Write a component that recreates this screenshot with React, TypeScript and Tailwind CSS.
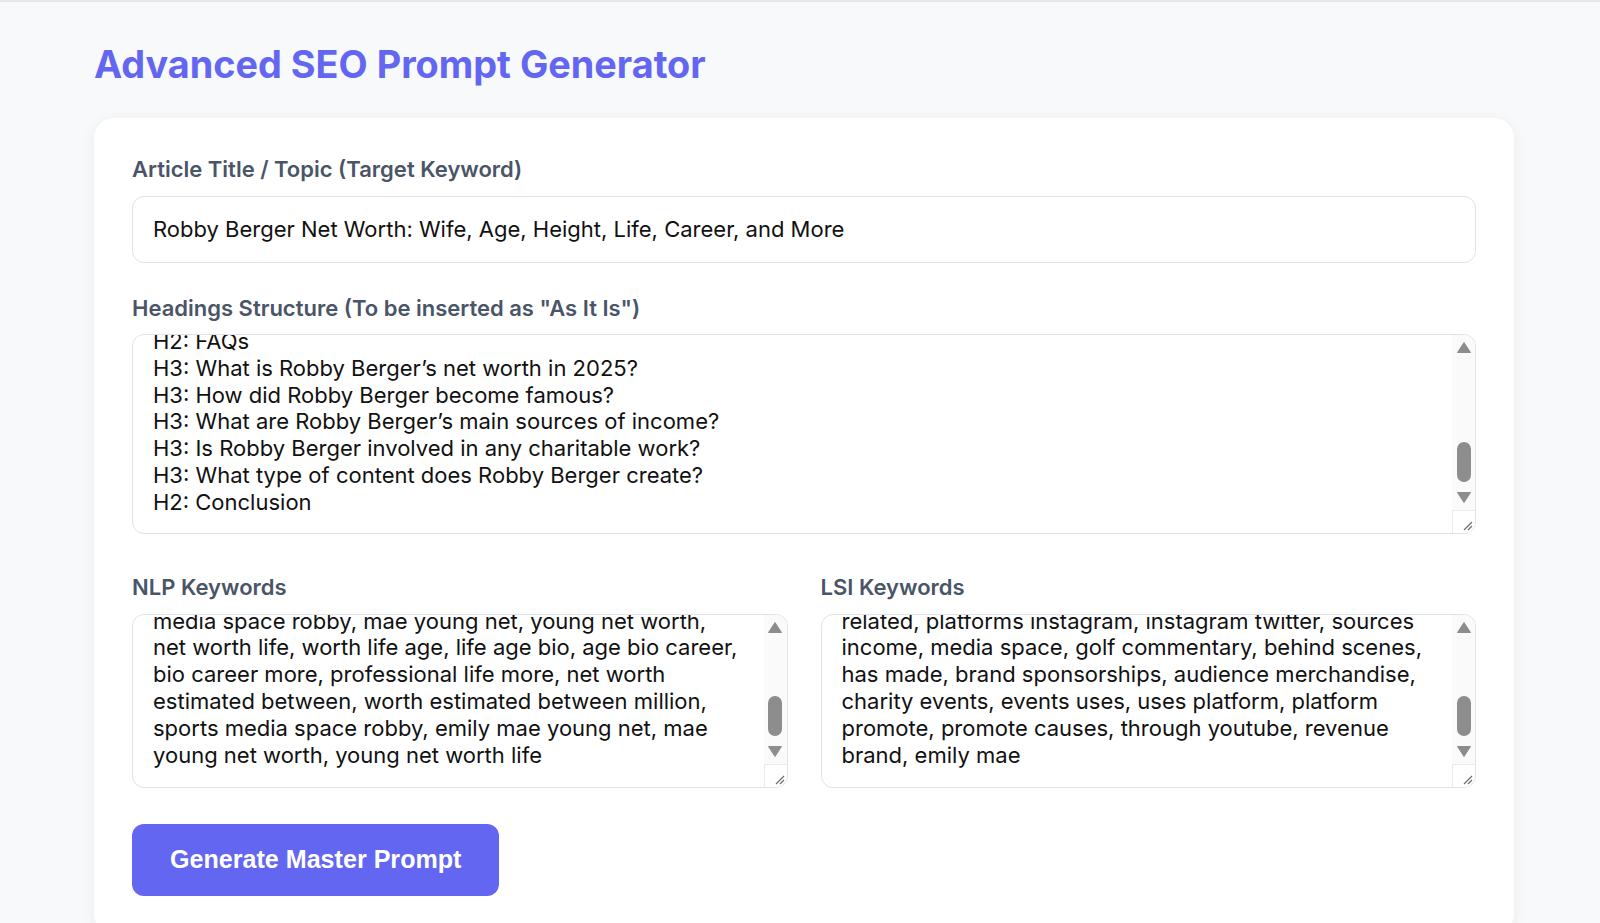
import { FC, RefObject, useEffect, useRef, useState } from 'react';

const HEADINGS = [
  'H1: Robby Berger Net Worth: Wife, Age, Height, Life, Career, and More',
  'H2: Who Is Robby Berger?',
  'H2: Robby Berger Net Worth in 2025',
  'H2: Early Life and Background',
  'H2: Age, Height, and Physical Appearance',
  'H2: Robby Berger’s Wife and Personal Life',
  'H2: Career Journey',
  'H3: Getting Started in Golf Media',
  'H3: Growth on YouTube',
  'H3: Work in the Sports Media Space',
  'H2: Sources of Income',
  'H3: YouTube Revenue',
  'H3: Brand Sponsorships and Merchandise',
  'H2: Social Media Presence',
  'H2: Charity Work and Causes',
  'H2: Key Facts About Robby Berger',
  'H2: FAQs',
  'H3: What is Robby Berger’s net worth in 2025?',
  'H3: How did Robby Berger become famous?',
  'H3: What are Robby Berger’s main sources of income?',
  'H3: Is Robby Berger involved in any charitable work?',
  'H3: What type of content does Robby Berger create?',
  'H2: Conclusion',
].join('\n');

const NLP = [
  'robby berger, net worth, robby berger net worth,',
  'emily mae young, golf youtuber, sports media,',
  'berger net worth, robby berger wife, robby berger',
  'age, robby berger height, golf content creator,',
  'youtube channel, brand deals, golf commentary,',
  'robby berger net, berger net worth wife, net worth',
  'wife age, wife age height, age height life, height',
  'life career, life career more, career and more,',
  'robby berger emily, berger emily mae, emily mae',
  'young, robby berger career, golf media space,',
  'space robby berger, sports media space, media space,',
  'media space robby, mae young net, young net worth,',
  'net worth life, worth life age, life age bio, age bio career,',
  'bio career more, professional life more, net worth',
  'estimated between, worth estimated between million,',
  'sports media space robby, emily mae young net, mae',
  'young net worth, young net worth life',
].join('\n');

const LSI = [
  'golf youtuber, content creator, youtube channel,',
  'golf videos, social media, personal life, early',
  'life, married life, wife emily, golf course, golf',
  'community, online audience, subscribers, views,',
  'sponsorship deals, golf brands, media career,',
  'sports commentary, digital creator, annual income,',
  'estimated net worth, career growth, golf fans,',
  'public figure, family life, height weight, age',
  'birthday, social platforms, fan base, channel',
  'growth, golf equipment, creator economy, media',
  'appearances, podcast, golf tournaments, events',
  'related, platforms instagram, instagram twitter, sources',
  'income, media space, golf commentary, behind scenes,',
  'has made, brand sponsorships, audience merchandise,',
  'charity events, events uses, uses platform, platform',
  'promote, promote causes, through youtube, revenue',
  'brand, emily mae',
].join('\n');

const labelClass = 'block text-[22px] leading-[26.6px] font-semibold text-[#4a5568] mb-[13px]';

// scrollbar drawn over the textarea, like the browser one
const FakeScrollbar: FC<object> = () => (
  <div className="pointer-events-none absolute top-[1px] right-[1px] bottom-[1px] flex w-[23px] flex-col overflow-hidden rounded-r-[11px] bg-[#fafafa]">
    <div className="flex h-[25px] items-center justify-center">
      <svg width="14" height="11" viewBox="0 0 14 11">
        <path d="M7 0.5 L13.5 10.5 L0.5 10.5 Z" fill="#8d8d8d" strokeLinejoin="round" stroke="#8d8d8d" />
      </svg>
    </div>
    <div className="flex flex-1 flex-col justify-end pb-[3px]">
      <div className="mx-auto h-[40px] w-[14px] rounded-full bg-[#8d8d8d]" />
    </div>
    <div className="flex h-[25px] items-center justify-center">
      <svg width="14" height="11" viewBox="0 0 14 11">
        <path d="M0.5 0.5 L13.5 0.5 L7 10.5 Z" fill="#8d8d8d" strokeLinejoin="round" stroke="#8d8d8d" />
      </svg>
    </div>
    <div className="relative h-[23px] border-t border-l border-[#ebebeb] bg-white">
      <svg className="absolute right-[2px] bottom-[2px]" width="12" height="12" viewBox="0 0 12 12">
        <path d="M11 3 L3 11 M11 7 L7 11" stroke="#6f6f6f" strokeWidth="1.2" />
      </svg>
    </div>
  </div>
);

interface AreaProps {
  id: string;
  value: string;
  onChange: (v: string) => void;
  areaRef: RefObject<HTMLTextAreaElement | null>;
  height: string;
}

const ScrollArea: FC<AreaProps> = ({ id, value, onChange, areaRef, height }) => (
  <div className="relative">
    <textarea
      id={id}
      ref={areaRef}
      value={value}
      wrap="off"
      onChange={(e) => onChange(e.target.value)}
      className={`block w-full resize-none overflow-hidden rounded-[12px] border border-[#dde3ec] bg-white pt-[20px] pr-[43px] pb-[18px] pl-[20px] text-[22px] leading-[26.8px] text-[#111] outline-none [scrollbar-width:none] ${height}`}
    />
    <FakeScrollbar />
  </div>
);

const App: FC<object> = () => {
  const [title, setTitle] = useState('Robby Berger Net Worth: Wife, Age, Height, Life, Career, and More');
  const [headings, setHeadings] = useState(HEADINGS);
  const [nlp, setNlp] = useState(NLP);
  const [lsi, setLsi] = useState(LSI);

  const headingsRef = useRef<HTMLTextAreaElement>(null);
  const nlpRef = useRef<HTMLTextAreaElement>(null);
  const lsiRef = useRef<HTMLTextAreaElement>(null);

  // textareas show their last lines, as after pasting
  useEffect(() => {
    [headingsRef, nlpRef, lsiRef].forEach((ref) => {
      if (ref.current) ref.current.scrollTop = ref.current.scrollHeight;
    });
  }, []);

  return (
    <div className="min-h-screen border-t-2 border-[#e4e6eb] bg-[#f8f9fb] [font-family:Inter,sans-serif]">
      <div className="pl-[94px] pt-[42px]">
        <h1 className="text-[37.8px] leading-[40px] font-bold text-[#6366f1]">Advanced SEO Prompt Generator</h1>

        <div className="mt-[34px] w-[1420px] rounded-[20px] bg-white p-[38px] shadow-[0_2px_14px_rgba(15,23,42,0.06)]">
          <div>
            <label htmlFor="title" className={labelClass}>
              Article Title / Topic (Target Keyword)
            </label>
            <input
              id="title"
              type="text"
              value={title}
              onChange={(e) => setTitle(e.target.value)}
              className="block h-[67px] w-full rounded-[12px] border border-[#dde3ec] bg-white px-[20px] text-[22px] text-[#111] outline-none"
            />
          </div>

          <div className="mt-[32px]">
            <label htmlFor="headings" className={labelClass}>
              Headings Structure (To be inserted as &quot;As It Is&quot;)
            </label>
            <ScrollArea id="headings" value={headings} onChange={setHeadings} areaRef={headingsRef} height="h-[200px]" />
          </div>

          <div className="mt-[40px] grid grid-cols-2 gap-[33px]">
            <div>
              <label htmlFor="nlp" className={labelClass}>
                NLP Keywords
              </label>
              <ScrollArea id="nlp" value={nlp} onChange={setNlp} areaRef={nlpRef} height="h-[174px]" />
            </div>
            <div>
              <label htmlFor="lsi" className={labelClass}>
                LSI Keywords
              </label>
              <ScrollArea id="lsi" value={lsi} onChange={setLsi} areaRef={lsiRef} height="h-[174px]" />
            </div>
          </div>

          <button
            type="button"
            className="mt-[36px] h-[72px] rounded-[12px] bg-[#6366f1] px-[38px] text-[25.1px] font-bold text-white [font-family:'Liberation_Sans',Arial,sans-serif]"
          >
            Generate Master Prompt
          </button>
        </div>
      </div>
    </div>
  );
};

export default App;
